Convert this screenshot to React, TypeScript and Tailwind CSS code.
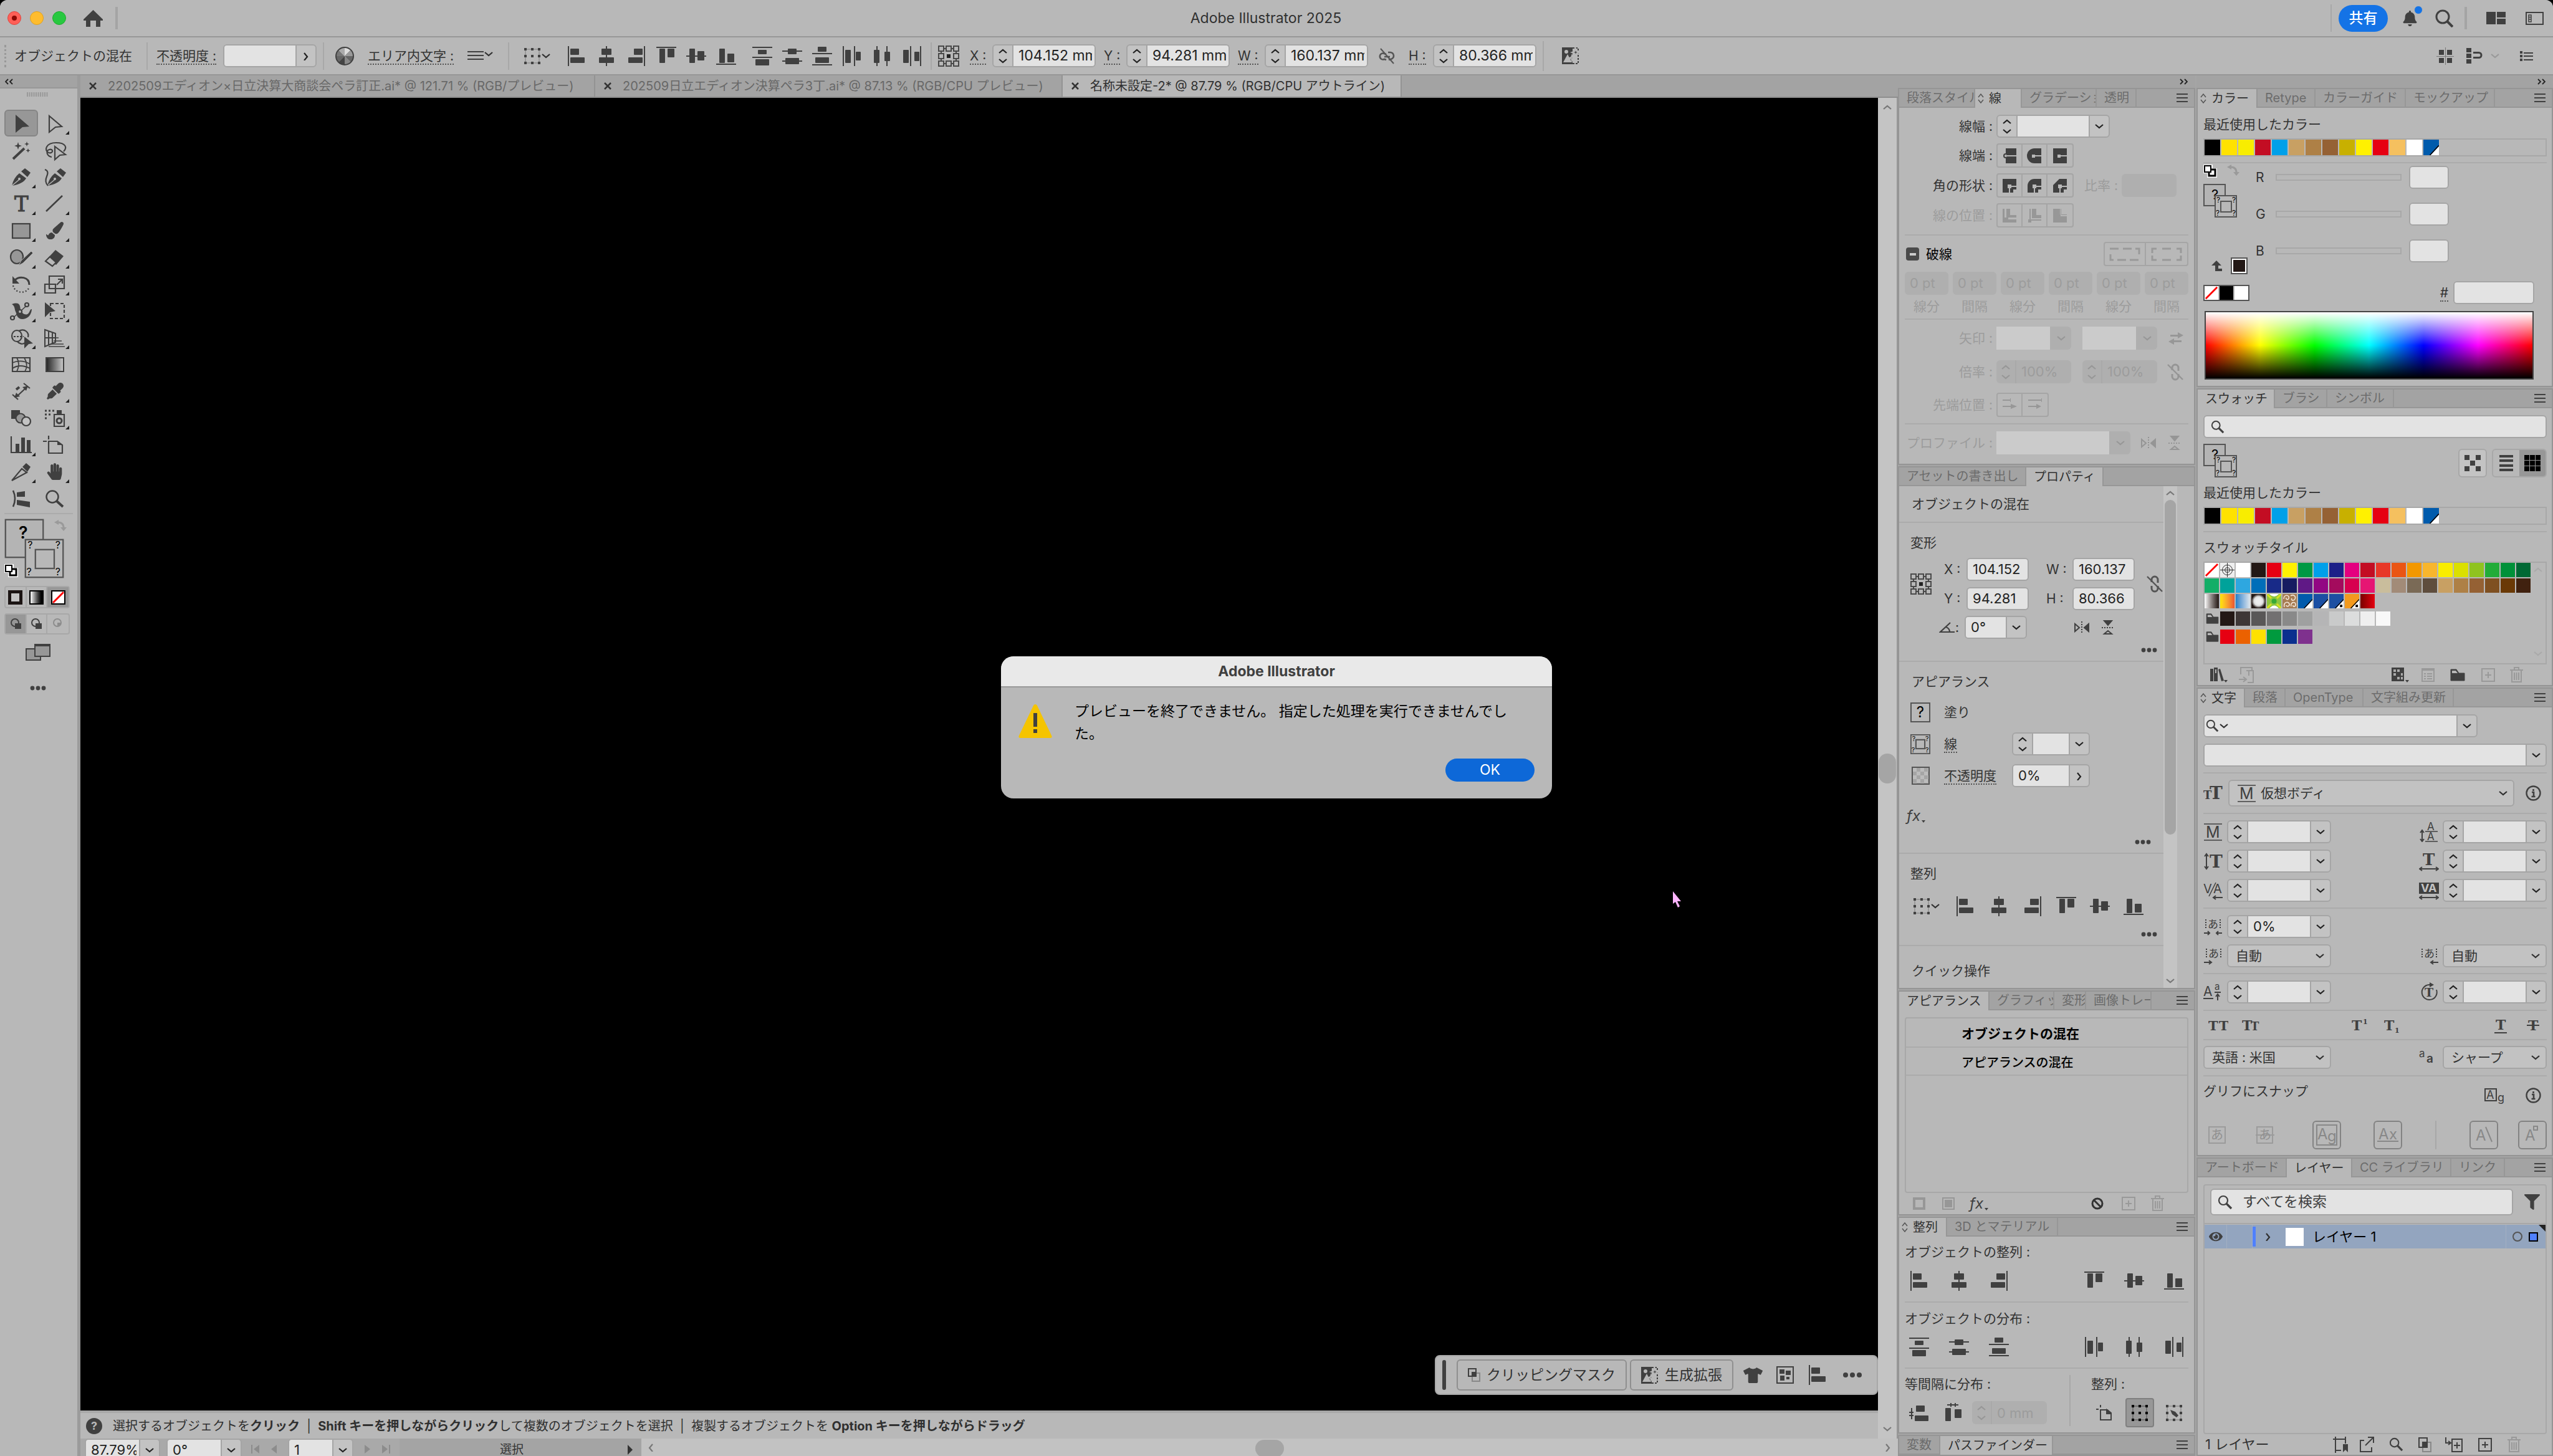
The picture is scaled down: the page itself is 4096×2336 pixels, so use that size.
import type { ReactNode } from 'react';
import clsx from 'clsx';
import { FaBell, FaEye, FaEyeDropper, FaFilter, FaHandPaper, FaPaintBrush, FaTshirt } from 'react-icons/fa';

type Rect = [number, number, number, number];

/* ---------- shared glyphs ---------- */

const alignShapes: Record<string, Rect[]> = {
    left: [[2, 0, 2, 32], [6, 4, 14, 10], [6, 18, 23, 9]],
    hcenter: [[15, 0, 2, 32], [8, 4, 16, 10], [4, 18, 24, 9]],
    right: [[28, 0, 2, 32], [12, 4, 14, 10], [3, 18, 23, 9]],
    top: [[0, 1, 32, 2], [5, 4, 9, 23], [18, 4, 11, 14]],
    vcenter: [[0, 15, 32, 2], [5, 4, 9, 23], [18, 8, 11, 15]],
    bottom: [[0, 28, 32, 2], [5, 4, 9, 23], [18, 12, 11, 14]],
    distTop: [[0, 1, 32, 2], [9, 6, 14, 7], [0, 17, 32, 2], [5, 21, 22, 10]],
    distMid: [[0, 7, 32, 2], [9, 4, 14, 9], [0, 23, 32, 2], [5, 19, 22, 10]],
    distBottom: [[9, 1, 14, 8], [0, 11, 32, 2], [5, 18, 22, 9], [0, 29, 32, 2]],
    distLeft: [[1, 0, 2, 32], [5, 6, 9, 21], [19, 0, 2, 32], [22, 9, 8, 14]],
    distCenter: [[7, 0, 2, 32], [3, 6, 9, 21], [23, 0, 2, 32], [20, 9, 9, 15]],
    distRight: [[2, 6, 9, 21], [13, 0, 2, 32], [20, 9, 8, 15], [29, 0, 2, 32]],
    spaceV: [[1, 14, 7, 2], [1, 19, 7, 2], [4, 8, 2, 18], [12, 4, 14, 10], [10, 20, 22, 9]],
    spaceH: [[6, 2, 18, 2], [11, 0, 2, 6], [18, 0, 2, 6], [3, 8, 9, 21], [18, 10, 11, 14]],
};

const AlignIcon = ({ kind }: { kind: string }) => (
    <svg width="32" height="32" viewBox="0 0 32 32" fill="#404040">
        {alignShapes[kind].map(([x, y, w, h], i) => <rect key={i} x={x} y={y} width={w} height={h} rx={w > 2 && h > 2 ? 1 : 0} />)}
    </svg>
);

const AlignButton = ({ kind }: { kind: string }) => (
    <button aria-label={kind} className="flex w-8 justify-center"><AlignIcon kind={kind} /></button>
);

const chevrons = { down: 'M2 4l6 5 6-5', up: 'M2 10l6-5 6 5', right: 'M5 2l5 6-5 6', left: 'M10 2L5 8l5 6' };

const Chevron = ({ dir = 'down', color = '#303030' }: { dir?: keyof typeof chevrons; color?: string }) => (
    <svg width="16" height="14" viewBox="0 0 16 14" fill="none" stroke={color} strokeWidth="2.2"><path d={chevrons[dir]} /></svg>
);

const Dots = () => (
    <svg width="26" height="8" viewBox="0 0 26 8" fill="#404040"><circle cx="4" cy="4" r="3.4" /><circle cx="13" cy="4" r="3.4" /><circle cx="22" cy="4" r="3.4" /></svg>
);

const Magnifier = ({ size = 24 }: { size?: number }) => (
    <svg width={size} height={size} viewBox="0 0 24 24" fill="none" stroke="#404040"><circle cx="9" cy="9" r="7" strokeWidth="2.2" /><path d="M14 14l8 8" strokeWidth="3.4" /></svg>
);

const RefPoint = () => (
    <svg width="34" height="34" viewBox="0 0 34 34" fill="none" stroke="#4a4a4a" strokeWidth="2">
        <path d="M5 5h24v24H5z" />
        {[1, 13, 25].map((y) => [1, 13, 25].map((x) => (
            <rect key={`${x}-${y}`} x={x} y={y} width="8" height="8" fill={x === 13 && y === 13 ? '#222' : '#b8b8b8'} stroke={x === 13 && y === 13 ? '#b8b8b8' : '#4a4a4a'} />
        )))}
    </svg>
);

const BoundsIcon = ({ color = '#404040' }: { color?: string }) => (
    <svg width="28" height="28" viewBox="0 0 28 28" fill={color}>
        <path d="M3 3h22v22H3z" fill="none" stroke={color} strokeOpacity="0.5" />
        {[1, 12, 23].map((y) => [1, 12, 23].map((x) => <rect key={`${x}-${y}`} x={x} y={y} width="4" height="4" />))}
    </svg>
);

const LinkOff = ({ color = '#555' }: { color?: string }) => (
    <svg width="28" height="32" viewBox="0 0 28 32" fill="none" stroke={color} strokeWidth="3">
        <path d="M9 13V9a5 5 0 0 1 10 0v5M9 19v4a5 5 0 0 0 10 0v-4" />
        <path d="M2 4l24 24" strokeWidth="2.4" />
    </svg>
);

const LinkSlanted = () => (
    <svg width="28" height="28" viewBox="0 0 28 28" fill="none" stroke="#555" strokeWidth="2.6">
        <path d="M12 11l-3-1a5 5 0 1 0 0 9l3 1M15 8h3a5 5 0 0 1 1 11l-3 1M9 15h9" />
        <path d="M3 2l21 24" strokeWidth="2" />
    </svg>
);

const FlipH = ({ color = '#404040' }: { color?: string }) => (
    <svg width="24" height="20" viewBox="0 0 24 20" stroke={color} strokeWidth="2"><path d="M1 4v12l7-6z" fill="none" /><path d="M23 4v12l-7-6z" fill={color} /><path d="M12 0v20" strokeDasharray="2 2" /></svg>
);

const FlipV = ({ color = '#404040' }: { color?: string }) => (
    <svg width="20" height="24" viewBox="0 0 20 24" stroke={color} strokeWidth="2"><path d="M4 1h12l-6 7z" fill={color} /><path d="M4 22h12l-6-5z" fill="none" /><path d="M0 12h20" strokeDasharray="2 2" /></svg>
);

const Sparkle = () => (
    <svg width="28" height="27" viewBox="0 0 28 27" fill="none" stroke="#404040" strokeWidth="2">
        <path d="M1 1h15v25H1z" fill="#404040" />
        <path d="M17 1h9v25h-9" strokeDasharray="3 2" />
        <path d="M2 24l7-13 7 13z" fill="#b8b8b8" stroke="none" />
        <circle cx="7" cy="7" r="3" fill="#b8b8b8" stroke="none" />
        <path d="M22 2l1.5 4.5L28 8l-4.5 1.5L22 14l-1.5-4.5L16 8l4.5-1.5zM16 13l1 3 3 1-3 1-1 3-1-3-3-1 3-1z" fill="#404040" stroke="#b8b8b8" />
    </svg>
);

const Trash = () => (
    <svg width="21" height="26" viewBox="0 0 21 26" fill="none" stroke="#999" strokeWidth="2"><path d="M0 5h21M7 4V1h7v3M3 6v18h15V6M7 9v12M10.5 9v12M14 9v12" /></svg>
);

const PlusBox = ({ color = '#999' }: { color?: string }) => (
    <svg width="22" height="22" viewBox="0 0 22 22" fill="none" stroke={color} strokeWidth="2"><path d="M1 1h20v20H1zM11 6v10M6 11h10" /></svg>
);

const Folder = ({ big }: { big?: boolean }) => (
    <svg width={big ? 24 : 21} height={big ? 20 : 17} viewBox="0 0 24 20"><path d="M1 19V1h9l4 6h9v12z" fill="#404040" stroke="#404040" /><path d="M3 3h6l3 4H3z" fill="#b8b8b8" /></svg>
);

const Info = () => (
    <svg width="25" height="25" viewBox="0 0 25 25"><circle cx="12.5" cy="12.5" r="11" fill="none" stroke="#404040" strokeWidth="2.4" /><path d="M12.5 6v3M10 11h3v7M9.5 18h6" stroke="#404040" strokeWidth="2.6" fill="none" /></svg>
);

const SwapArrow = () => (
    <svg width="20" height="18" viewBox="0 0 20 18"><path d="M6 4q9 0 9 9" fill="none" stroke="#9a9a9a" strokeWidth="3" /><path d="M0 4l7-4v8zM15 18l-5-6h10z" fill="#9a9a9a" /></svg>
);

const DefaultColors = () => (
    <svg width="22" height="21" viewBox="0 0 22 21"><path d="M0 0h15v6h7v15H6v-7H0z" fill="#fff" /><path d="M9 8h10v10H9z" fill="#fff" stroke="#000" strokeWidth="3" /><path d="M2 2h10v10H2z" fill="#fff" stroke="#000" strokeWidth="2" /></svg>
);

const Fx = () => (
    <span className="flex items-end gap-0.5 text-[24px] leading-6 text-[#404040] italic">fx<svg width="6" height="5"><path d="M0 0h6L3 4z" fill="#404040" /></svg></span>
);

/* fill box with an overlapping stroke box, both in the mixed state */
const MixedSwatch = ({ size, line = 2, mark = 12 }: { size: number; line?: number; mark?: number }) => (
    <svg width={size} height={size} viewBox="0 0 54 54" fontFamily="Inter" fill="#000">
        <rect x="1" y="1" width="34" height="34" fill="#b4b4b4" stroke="#555" strokeWidth={line} />
        <text x="13" y={mark > 10 ? 25 : 18} fontSize={mark > 10 ? 22 : 15} fontWeight={mark > 10 ? 400 : 600}>?</text>
        <rect x="19" y="19" width="34" height="34" fill="#b8b8b8" stroke="#555" strokeWidth={line} />
        <rect x="28" y="28" width="17" height="17" fill="none" stroke="#555" strokeWidth={line} />
        <g fontSize={mark}><text x="21" y={mark > 10 ? 30 : 27}>?</text><text x="46" y={mark > 10 ? 30 : 27}>?</text><text x="20" y="51">?</text><text x="46" y="51">?</text></g>
    </svg>
);

/* ---------- form controls ---------- */

type FieldProps = { label: string; value?: string; spin?: boolean; dd?: 'down' | 'right'; off?: boolean; className?: string };

function Field({ label, value = '', spin, dd, off, className }: FieldProps) {
    const ink = off ? '#979797' : '#222';
    return (
        <span className={clsx('flex h-[37px] shrink-0 overflow-hidden rounded-md', off ? 'bg-[#afafaf]' : 'border-2 border-[#a5a5a5] bg-[#c3c3c3]', className)}>
            {spin && (
                <span className={clsx('flex w-8 shrink-0 flex-col items-center justify-center gap-0.5 border-r-2', off ? 'border-[#a9a9a9]' : 'border-[#a5a5a5]')}>
                    <button aria-label={`${label} +`} disabled={off}><Chevron dir="up" color={ink} /></button>
                    <button aria-label={`${label} -`} disabled={off}><Chevron color={ink} /></button>
                </span>
            )}
            <input aria-label={label} defaultValue={value} disabled={off} className={clsx('min-w-0 flex-1 pr-1 pl-2 text-[22px]', off ? 'text-[#9c9c9c]' : 'bg-[#e3e3e3] text-[#222]')} />
            {dd && (
                <button aria-label={`${label} menu`} className="flex w-8 shrink-0 items-center justify-center border-l-2 border-[#a5a5a5]"><Chevron dir={dd} color={ink} /></button>
            )}
        </span>
    );
}

function Select({ label, value, className, children }: { label: string; value: string; className?: string; children?: ReactNode }) {
    return (
        <span className={clsx('relative flex shrink-0 items-center rounded-md border-2 border-[#a5a5a5] bg-[#c2c2c2] pl-3', className)}>
            {children}
            <select aria-label={label} className="h-full min-w-0 flex-1 appearance-none text-[21px]"><option>{value}</option></select>
            <span className="pointer-events-none absolute right-2"><Chevron /></span>
        </span>
    );
}

/* empty, disabled drop-down */
const OffSelect = ({ label, className }: { label: string; className?: string }) => (
    <span className={clsx('relative flex h-[37px] shrink-0 items-center rounded-md bg-[#afafaf]', className)}>
        <select aria-label={label} disabled className="mr-[34px] h-full flex-1 appearance-none bg-[#cbcbcb] opacity-100"><option></option></select>
        <span className="pointer-events-none absolute right-2"><Chevron color="#979797" /></span>
    </span>
);

const Rule = ({ className }: { className?: string }) => <hr className={clsx('h-0.5 border-0 bg-[#ababab]', className)} />;
const VRule = ({ className }: { className?: string }) => <span className={clsx('w-0.5 shrink-0 bg-[#a8a8a8]', className)} />;

type Tab = { name: string; w: string; active?: boolean; arrows?: boolean };

function Panel({ tabs, menu = true, className, children }: { tabs: Tab[]; menu?: boolean; className?: string; children?: ReactNode }) {
    return (
        <section className={clsx('flex shrink-0 flex-col border-2 border-[#959595] bg-[#b8b8b8]', className)}>
            <div className="flex h-[30px] shrink-0 bg-[#a3a3a3]">
                {tabs.map((t) => (
                    <button key={t.name} className={clsx('flex shrink-0 items-center overflow-hidden border-r-2 border-[#979797] text-[20px] leading-5 whitespace-nowrap', t.w, t.active ? 'bg-[#b8b8b8] text-[#303030]' : 'border-b-2 text-[#6c6c6c]', t.arrows ? 'pl-1' : 'pl-3')}>
                        {t.arrows && <svg className="mr-2 shrink-0" width="10" height="16" viewBox="0 0 10 16" fill="none" stroke="#555" strokeWidth="1.5"><path d="M1 6l4-5 4 5M1 10l4 5 4-5" /></svg>}
                        {t.name}
                    </button>
                ))}
                <div className="flex flex-1 items-center justify-end border-b-2 border-[#979797] pr-2.5">
                    {menu && <button aria-label="パネルメニュー"><svg width="18" height="14" viewBox="0 0 18 14" stroke="#404040" strokeWidth="2"><path d="M0 1h18M0 7h18M0 13h18" /></svg></button>}
                </div>
            </div>
            {children}
        </section>
    );
}

const DockHeader = () => (
    <div className="flex h-5 shrink-0 items-center justify-end bg-[#a3a3a3] pr-3">
        <svg width="13" height="10" viewBox="0 0 13 10" fill="none" stroke="#222" strokeWidth="1.8"><path d="M1 1l4 4-4 4M8 1l4 4-4 4" /></svg>
    </div>
);

/* ---------- title bar and control bar ---------- */

const TitleBar = () => (
    <header className="flex h-[60px] shrink-0 items-center border-b-2 border-[#979797] bg-[#b8b8b8]">
        <div className="flex w-[323px] items-center pl-3">
            <div className="flex gap-3.5">
                <button aria-label="閉じる" className="flex size-[22px] items-center justify-center rounded-full border border-[#e0443e] bg-[#ff5f57]"><span className="size-2 rounded-full bg-[#8c0a05]" /></button>
                <button aria-label="しまう" className="size-[22px] rounded-full border border-[#dea123] bg-[#febc2e]" />
                <button aria-label="拡大" className="size-[22px] rounded-full border border-[#1dad2b] bg-[#28c840]" />
            </div>
            <button aria-label="ホーム" className="ml-7">
                <svg width="31" height="27" viewBox="0 0 31 27" fill="#404040"><path d="M15.5 0L31 15v2h-4v10h-7v-10h-9v10H4V17H0v-2z" /></svg>
            </button>
            <span className="ml-5 h-9 w-1 bg-[#a4a4a4]" />
        </div>
        <h1 className="flex-1 text-center text-[23px] text-[#303030]">Adobe Illustrator 2025</h1>
        <div className="flex h-full w-[357px] items-center">
            <VRule className="h-11" />
            <button className="ml-[11px] h-[43px] w-[79px] rounded-full bg-[#1473e6] text-[23px] font-medium text-white">共有</button>
            <button aria-label="通知" className="relative ml-[22px] flex w-[26px] justify-center"><FaBell size={25} color="#404040" /><span className="absolute -top-2 -right-2 size-3.5 rounded-full border border-[#b8b8b8] bg-[#1473e6]" /></button>
            <button aria-label="検索" className="ml-7">
                <svg width="29" height="29" viewBox="0 0 29 29" fill="none" stroke="#404040"><circle cx="12" cy="12" r="10" strokeWidth="3" /><path d="M19 19l9 9" strokeWidth="4" /></svg>
            </button>
            <span className="ml-4.5 h-9 w-1 bg-[#a4a4a4]" />
            <button aria-label="ワークスペース" className="ml-[31px]">
                <svg width="31" height="20" viewBox="0 0 31 20" fill="#404040"><path d="M0 0h15v20H0zM17 0h14v9H17zM17 11h14v9H17z" /></svg>
            </button>
            <button aria-label="表示" className="ml-8">
                <svg width="29" height="22" viewBox="0 0 29 22" fill="none" stroke="#404040" strokeWidth="2"><path d="M1 2h27v19H1zM0 2h29" /><path d="M5 6h4v11H5zM5 9.5h4M5 13h4" strokeWidth="1.5" /></svg>
            </button>
        </div>
    </header>
);

const Dotted = ({ children }: { children: ReactNode }) => <span className="border-b-2 border-dotted border-[#555] leading-[26px] whitespace-pre">{children}</span>;

const ControlBar = () => (
    <div className="flex h-[61px] shrink-0 items-center border-b-2 border-[#979797] bg-[#b8b8b8] text-[21px] [&_input]:text-[23px]">
        <span className="ml-[7px] h-9 border-l-3 border-dotted border-[#999]" />
        <span className="ml-[13px] w-[212px]">オブジェクトの混在</span>
        <VRule className="h-11" />
        <span className="ml-3.5 w-[107px]"><Dotted>不透明度 :</Dotted></span>
        <Field label="不透明度" dd="right" className="w-[150px]" />
        <VRule className="ml-2.5 h-11" />
        <span className="ml-[18px] size-[30px] rounded-full border-2 border-[#404040] bg-[conic-gradient(#ddd_0_12%,#999_12%_25%,#666_25%_37%,#888_37%_50%,#444_50%_62%,#666_62%_75%,#777_75%_87%,#aaa_87%)]" />
        <span className="ml-[22px] w-[160px]"><Dotted>エリア内文字 :</Dotted></span>
        <button aria-label="行揃え" className="flex w-[65px] items-start"><svg width="26" height="20" viewBox="0 0 26 20" stroke="#404040" strokeWidth="2"><path d="M0 3h26M0 9h26M0 15h26" /></svg><Chevron /></button>
        <VRule className="h-11" />
        <button aria-label="整列対象" className="ml-[23px] flex w-[69px] items-center"><BoundsIcon /><Chevron /></button>
        <div className="flex w-[298px] gap-4">
            {['left', 'hcenter', 'right', 'top', 'vcenter', 'bottom'].map((k) => <AlignButton key={k} kind={k} />)}
        </div>
        <div className="flex w-[286px] gap-4">
            {['distTop', 'distMid', 'distBottom', 'distLeft', 'distCenter', 'distRight'].map((k) => <AlignButton key={k} kind={k} />)}
        </div>
        <VRule className="h-11" />
        <button aria-label="基準点" className="ml-2.5"><RefPoint /></button>
        <span className="ml-[17px] w-9"><Dotted>X :</Dotted></span>
        <Field label="X" value="104.152 mm" spin className="w-[166px]" />
        <span className="ml-[13px] w-9"><Dotted>Y :</Dotted></span>
        <Field label="Y" value="94.281 mm" spin className="w-[166px]" />
        <span className="ml-[13px] w-[43px]"><Dotted>W :</Dotted></span>
        <Field label="W" value="160.137 mm" spin className="w-[166px]" />
        <button aria-label="縦横比を固定" className="ml-[17px]"><LinkSlanted /></button>
        <span className="ml-5 w-[39px]"><Dotted>H :</Dotted></span>
        <Field label="H" value="80.366 mm" spin className="w-[166px]" />
        <VRule className="ml-2.5 h-12" />
        <button aria-label="生成" className="ml-[29px]"><Sparkle /></button>
        <div className="ml-auto flex items-center pr-8">
            <svg width="28" height="28" viewBox="0 0 28 28" fill="#404040"><path d="M4 4h8v8H4zM17 4h8v8h-8zM4 17h8v8H4zM17 17h8v8h-8z" /><path d="M14 0h1v28h-1zM0 14h28v1H0z" fill="#777" /></svg>
            <svg className="ml-5" width="26" height="26" viewBox="0 0 26 26" fill="#404040"><path d="M0 0h8v7H0zM0 9h8v7H0zM0 18h8v7H0zM11 6h3v3h-3zM11 14h3v3h-3z" /><path d="M14 7.5h6a4 4 0 0 1 0 8h-6" fill="none" stroke="#404040" strokeWidth="3" /></svg>
            <span className="ml-3"><Chevron color="#999" /></span>
            <svg className="ml-8" width="21" height="16" viewBox="0 0 21 16" fill="#404040"><path d="M0 0h4v4H0zM0 6h4v4H0zM0 12h4v4H0zM6 2h15v2H6zM6 7h15v2H6zM6 13h15v2H6z" /></svg>
        </div>
    </div>
);

/* ---------- tool bar ---------- */

const ink = { stroke: '#404040', strokeWidth: 2.2, fill: 'none' };
const pen = <g fill="#404040"><path d="M9 34q3-13 12-20l11 8q-5 9-23 12z" /><path d="M24 11l6-5 9 7-5 7z" /><path d="M9 34l12-10" stroke="#b8b8b8" strokeWidth="1.5" /><circle cx="21" cy="23" r="2" fill="#b8b8b8" /></g>;

const tools: { name: string; art: ReactNode; more?: boolean; active?: boolean }[] = [
    { name: '選択', active: true, art: <path d="M15 6l22 19-11 1-11 9z" fill="#404040" /> },
    { name: 'ダイレクト選択', more: true, art: <path d="M15 8l20 17-10 1-10 8z" {...ink} /> },
    { name: '自動選択', art: <><path d="M11 34l18-17" {...ink} strokeWidth="4" /><path d="M19 7l1.5 4.500L25 13l-4.5 1.500L19 19l-1.500-4.500L13 13l4.500-1.500zM33 6l1 3 3 1-3 1-1 3-1-3-3-1 3-1zM35 17l1 2.500 2.500 1-2.500 1-1 2.500-1-2.500-2.500-1 2.500-1z" fill="#404040" /></> },
    { name: 'なげなわ', art: <><path d="M14 24c-8-4-4-16 12-16s18 8 12 14M14 24c8 2 8-7 1-5s-3 11 4 12" {...ink} /><path d="M24 14l17 13-9 1-8 7z" {...ink} fill="#b8b8b8" /></> },
    { name: 'ペン', more: true, art: pen },
    { name: '曲線', art: <><g transform="translate(3 0)">{pen}</g><path d="M8 8q7 2 3 11t2 15" {...ink} /></> },
    { name: '文字', more: true, art: <text x="13" y="32" fontSize="34" fontFamily="DejaVu Serif" fill="#404040" stroke="#404040">T</text> },
    { name: '直線', more: true, art: <path d="M10 32L36 7" {...ink} strokeWidth="2.6" /> },
    { name: '長方形', more: true, art: <rect x="10" y="9" width="28" height="23" {...ink} fill="#979797" /> },
    { name: 'ブラシ', more: true, art: <g transform="translate(10 6)"><FaPaintBrush size={28} color="#404040" /></g> },
    { name: 'Shaper', more: true, art: <><ellipse cx="17" cy="19" rx="10" ry="11" {...ink} fill="#979797" /><path d="M20 33l4-8 16-15 3 3-16 16z" fill="#404040" stroke="#b8b8b8" /></> },
    { name: '消しゴム', more: true, art: <><path d="M12 22l13-14 13 10-12 14z" fill="#404040" /><path d="M9 26l7-7 10 9-6 6z" {...ink} fill="#b8b8b8" /></> },
    { name: '回転', more: true, art: <><path d="M13 14c8-8 24-6 24 7" {...ink} strokeWidth="3" /><path d="M10 7v12h11z" fill="#404040" /><path d="M11 22c3 14 23 14 26 2" {...ink} strokeDasharray="2 3" /></> },
    { name: '拡大・縮小', more: true, art: <><path d="M15 7h24v20H15z" {...ink} /><path d="M8 20h17v14H8z" {...ink} /><path d="M27 21l8-8M29 12h7v7" {...ink} /></> },
    { name: '線幅', more: true, art: <><path d="M9 9c14-5 13 4 14 9s7 9 11 7 4-9 7-8c-1 12-9 16-15 16-9 0-9-8-11-12-2-5-1-9-6-12z" fill="#404040" /><path d="M12 30l20-18" {...ink} strokeWidth="1.6" /><circle cx="10" cy="31" r="3" {...ink} /><circle cx="33" cy="10" r="3" {...ink} /><circle cx="22" cy="21" r="3" {...ink} fill="#b8b8b8" /></> },
    { name: '自由変形', more: true, art: <><path d="M17 8h22v24H17z" {...ink} strokeDasharray="5 3" /><path d="M8 6l17 14-9 2-8 8z" fill="#404040" /></> },
    { name: 'シェイプ形成', more: true, art: <><ellipse cx="17" cy="17" rx="8" ry="9" {...ink} /><path d="M20 9c10-5 17 3 15 10M18 26c3 4 9 5 12 2" {...ink} /><path d="M12 18h16" {...ink} strokeDasharray="3 2" /><path d="M29 18l14 11-7 1-7 7z" fill="#404040" /></> },
    { name: '遠近グリッド', more: true, art: <><path d="M8 7l17 6v14L8 34zM8 20h17M14 9v23M20 11v18" {...ink} strokeWidth="2" /><path d="M22 20h8M22 25h13M18 30h20M14 34h26" {...ink} strokeWidth="1.5" /></> },
    { name: 'メッシュ', art: <><path d="M10 9h28v22H10z" {...ink} /><path d="M17 9q6 10 0 22M29 9q7 12 1 22M10 17q14-6 28 2M10 26q12-8 28 0" {...ink} strokeWidth="1.8" /></> },
    { name: 'グラデーション', art: <rect x="10" y="9" width="28" height="22" stroke="#404040" strokeWidth="2" fill="url(#toolGradient)" /> },
    { name: '寸法', art: <><path d="M10 25l9 8M28 7l10 8M17 28l16-15" {...ink} /><path d="M13 30l3-8 6 6zM35 11l-3 8-6-6z" fill="#404040" /><path d="M16 17l5-4" {...ink} strokeWidth="4" /></> },
    { name: 'スポイト', more: true, art: <g transform="translate(11 6)"><FaEyeDropper size={27} color="#404040" /></g> },
    { name: 'ブレンド', art: <><path d="M8 7h14v14H8z" fill="#404040" /><circle cx="23" cy="20" r="7.5" {...ink} fill="#979797" /><circle cx="32" cy="25" r="7" {...ink} fill="#c3c3c3" /></> },
    { name: 'シンボルスプレー', more: true, art: <><path d="M23 14h16v19H23z" {...ink} /><path d="M27 7h8v6h-8z" fill="#404040" /><circle cx="31" cy="24" r="4" {...ink} strokeWidth="3" /><path d="M8 8h3M14 8h3M20 8h3M8 14h3M14 14h3M8 20h3" {...ink} strokeWidth="3" /></> },
    { name: 'グラフ', more: true, art: <><path d="M8 6v26h33" {...ink} /><path d="M15 18h6v13h-6zM24 8h6v23h-6zM33 12h6v19h-6z" fill="#404040" /></> },
    { name: 'アートボード', art: <><path d="M14 14h14l8 6v13H14z" {...ink} /><path d="M5 14h6M14 5v6" {...ink} /><path d="M28 14v6h8z" fill="#404040" /></> },
    { name: 'スライス', more: true, art: <><path d="M9 34l16-19 8 6z" {...ink} /><path d="M26 12l6-6 7 6-5 8z" fill="#404040" /></> },
    { name: '手のひら', more: true, art: <g transform="translate(10 6)"><FaHandPaper size={27} color="#404040" /></g> },
    { name: '回り込み', art: <><path d="M11 7q6 13 0 26" {...ink} strokeWidth="2.6" /><path d="M17 10l13-2v9H17zM17 22l21 3v9l-21-4z" fill="#404040" /></> },
    { name: 'ズーム', art: <><circle cx="20" cy="17" r="9.5" {...ink} strokeWidth="2.5" /><path d="M27 24l10 9" {...ink} strokeWidth="4" /></> },
];

const ToolBar = () => (
    <aside className="flex w-[129px] shrink-0 flex-col border-r-5 border-[#9b9b9b] bg-[#b8b8b8]">
        <div className="flex h-[21px] shrink-0 items-center border-b-2 border-[#979797] bg-[#a3a3a3] pl-2">
            <svg width="13" height="10" viewBox="0 0 13 10" fill="none" stroke="#222" strokeWidth="1.8"><path d="M5 1L1 5l4 4M12 1L8 5l4 4" /></svg>
        </div>
        <svg className="mt-1.5 ml-[43px] h-[7px] shrink-0" width="34" height="7" viewBox="0 0 34 7"><path d="M0 3.5h34" stroke="#999" strokeWidth="7" strokeDasharray="2 1.5" /></svg>
        <div className="mt-[21px] ml-[7px] grid w-[108px] grid-cols-2">
            {tools.map((t) => (
                <button key={t.name} aria-label={t.name} className={clsx('flex h-[43px] items-center justify-center', t.active && 'rounded-md border-2 border-[#858585] bg-[#979797]')}>
                    <svg className="shrink-0" width="48" height="40" viewBox="0 0 48 40">
                        <defs><linearGradient id="toolGradient"><stop stopColor="#222" /><stop offset="1" stopColor="#ccc" /></linearGradient></defs>
                        {t.art}
                        {t.more && <path d="M41 38h6v-6z" fill="#222" />}
                    </svg>
                </button>
            ))}
        </div>
        <Rule className="mx-[7px] mt-0.5 shrink-0" />
        <div className="relative mt-[7px] ml-[7px] h-24 w-[105px] shrink-0">
            <MixedSwatch size={96} line={1.3} mark={9} />
            <span className="absolute top-0.5 left-20"><SwapArrow /></span>
            <span className="absolute bottom-0.5 left-0"><DefaultColors /></span>
        </div>
        <div className="mt-3 ml-[7px] grid h-9 w-[105px] shrink-0 grid-cols-3 rounded-sm border-2 border-[#a8a8a8]">
            <button aria-label="カラー" className="flex items-center justify-center border-r-2 border-[#a8a8a8]"><span className="size-[23px] border-5 border-[#1b1413] bg-[#c3c3c3]" /></button>
            <button aria-label="グラデーション" className="flex items-center justify-center border-r-2 border-[#a8a8a8]"><span className="size-[23px] border-2 border-black bg-linear-to-r from-white to-black" /></button>
            <button aria-label="なし" className="flex items-center justify-center bg-[#979797]"><svg width="23" height="23"><path d="M1 1h21v21H1z" fill="#fff" stroke="#000" strokeWidth="2" /><path d="M3 20L20 3" stroke="red" strokeWidth="3" /></svg></button>
        </div>
        <div className="mt-2 ml-[7px] grid h-[34px] w-[105px] shrink-0 grid-cols-3 rounded-sm border-2 border-[#a8a8a8]">
            {['標準描画', '背面描画', '内側描画'].map((n, i) => (
                <button key={n} aria-label={n} className={clsx('flex items-center justify-center', i === 0 && 'bg-[#979797]', i < 2 && 'border-r-2 border-[#a8a8a8]')}>
                    <svg width="18" height="18" opacity={i === 2 ? 0.35 : 1}><circle cx="8" cy="7" r="6" fill="none" stroke="#404040" strokeWidth="2" /><path d={i === 2 ? 'M8 7h6q0 6-6 6z' : 'M8 8h10v9H8z'} fill="#404040" /></svg>
                </button>
            ))}
        </div>
        <button aria-label="スクリーンモード" className="mt-3.5 ml-[41px] w-10"><svg width="40" height="28" viewBox="0 0 40 28" stroke="#404040" strokeWidth="2" fill="#979797"><path d="M1 9h23v18H1z" /><path d="M15 2h24v19H15z" /><path d="M15 3h24" strokeWidth="4" /></svg></button>
        <button aria-label="ツールバーを編集" className="mt-10 ml-12 w-7"><Dots /></button>
    </aside>
);

/* ---------- document window ---------- */

const docTabs = [
    { w: 'w-[826px]', name: '2202509エディオン×日立決算大商談会ペラ訂正.ai* @ 121.71 % (RGB/プレビュー)' },
    { w: 'w-[750px]', name: '202509日立エディオン決算ペラ3丁.ai* @ 87.13 % (RGB/CPU プレビュー)' },
    { w: 'w-[544px]', name: '名称未設定-2* @ 87.79 % (RGB/CPU アウトライン)', active: true },
];

const NavMark = ({ flip, bar }: { flip?: boolean; bar?: boolean }) => (
    <svg width="18" height="18" viewBox="0 0 18 18" fill="#8c8c8c" className={clsx(flip && 'rotate-180')}><path d="M14 2v14L5 9z" />{bar && <path d="M1 2h2v14H1z" />}</svg>
);

const CanvasPane = () => (
    <div className="flex min-w-0 flex-1 flex-col">
        <div className="flex h-9 shrink-0 border-b-2 border-[#8e8e8e] bg-[#a3a3a3]">
            {docTabs.map((t) => (
                <button key={t.name} className={clsx('flex shrink-0 items-center border-r-2 border-[#939393] pl-3.5 text-[20px] whitespace-nowrap', t.w, t.active ? 'bg-[#b8b8b8] text-[#303030]' : 'text-[#686868]')}>
                    <svg className="mr-[18px]" width="12" height="12" viewBox="0 0 12 12" stroke="#333" strokeWidth="2.5"><path d="M1 1l10 10M11 1L1 11" /></svg>
                    {t.name}
                </button>
            ))}
        </div>
        <div className="flex min-h-0 flex-1">
            <div className="flex min-w-0 flex-1 flex-col">
                <div className="relative min-h-0 flex-1 bg-black">
                    <svg className="absolute top-[1272px] left-[2554px]" width="16" height="28" viewBox="0 0 16 28"><path d="M1 1v20l4-3 4 9 3-2-4-8h6z" fill="#ffb4ff" /></svg>
                    <div className="absolute right-0 bottom-[25px] flex h-16 items-center rounded-lg border-2 border-[#a8a8a8] bg-[#b8b8b8] pl-2.5 text-[23px] whitespace-nowrap">
                        <span className="h-12 w-1.5 rounded-sm bg-[#404040]" />
                        <button className="ml-[17px] flex h-[50px] w-[273px] items-center gap-2.5 rounded-md border-2 border-[#8f8f8f] pl-4">
                            <svg width="20" height="22" viewBox="0 0 20 22" fill="none" stroke="#404040" strokeWidth="2"><path d="M1 1h12v12H1z" /><path d="M7 8h12v13H7z" stroke="#888" /><path d="M7 7h6v6H7z" fill="#404040" /></svg>
                            クリッピングマスク
                        </button>
                        <button className="ml-[5px] flex h-[50px] w-[166px] items-center gap-2.5 rounded-md border-2 border-[#8f8f8f] pl-4"><Sparkle />生成拡張</button>
                        <button aria-label="モックアップ" className="ml-4"><FaTshirt size={31} color="#404040" /></button>
                        <button aria-label="リピート" className="ml-[22px]"><svg width="28" height="28" viewBox="0 0 28 28" fill="#404040"><path d="M1 1h26v26H1z" fill="none" stroke="#404040" strokeWidth="2" /><path d="M5 5h8v7H5zM15 7h8v7h-8zM6 15h7v8H6zM16 17h5v4h-5z" /></svg></button>
                        <button aria-label="整列" className="ml-[22px]"><AlignIcon kind="left" /></button>
                        <button aria-label="その他" className="mr-6 ml-[25px]"><svg width="30" height="8" fill="#404040"><circle cx="4" cy="4" r="4" /><circle cx="15" cy="4" r="4" /><circle cx="26" cy="4" r="4" /></svg></button>
                    </div>
                </div>
                <div className="flex h-[45px] shrink-0 items-center border-t-4 border-[#a8a8a8] bg-[#b8b8b8] pl-[9px] text-[20px] text-[#303030]">
                    <span className="mr-[17px] flex size-[26px] items-center justify-center rounded-full bg-[#404040] text-[18px] font-bold text-[#b8b8b8]">?</span>
                    <p className="whitespace-pre">選択するオブジェクトを<b>クリック</b>&nbsp; | &nbsp;<b>Shift キーを押しながらクリック</b>して複数のオブジェクトを選択&nbsp; | &nbsp;複製するオブジェクトを <b>Option キーを押しながらドラッグ</b></p>
                </div>
            </div>
            <div className="flex w-8 shrink-0 flex-col items-center justify-between border-r-2 border-[#979797] bg-[#c4c4c4] py-2">
                <Chevron dir="up" color="#777" />
                <span className="h-12 w-7 rounded-full bg-[#a5a5a5]" />
                <Chevron color="#777" />
            </div>
        </div>
        <div className="flex h-7 shrink-0 items-start overflow-hidden bg-[#a9a9a9] pl-[7px]">
            <Field label="ズーム" value="87.79%" dd="down" className="w-[121px]" />
            <Field label="回転角度" value="0°" dd="down" className="ml-2.5 w-[121px]" />
            <span className="mt-2 ml-3.5 flex w-[60px] gap-2.5"><NavMark bar /><NavMark /></span>
            <Field label="アートボード" value="1" dd="down" className="w-[105px]" />
            <span className="mt-2 ml-3.5 flex w-[60px] gap-2.5"><NavMark flip /><NavMark flip bar /></span>
            <span className="relative flex h-7 w-[388px] items-center justify-center bg-[#a4a4a4] pt-2 pr-7 text-[19px]">選択<svg className="absolute right-3" width="10" height="16"><path d="M0 0l8 8-8 8z" fill="#333" /></svg></span>
            <div className="flex h-7 flex-1 items-center justify-between bg-[#c2c2c2] px-2">
                <Chevron dir="left" color="#777" />
                <span className="mt-1 h-7 w-[46px] rounded-full bg-[#a5a5a5]" />
                <Chevron dir="right" color="#777" />
            </div>
        </div>
    </div>
);

/* ---------- first dock ---------- */

const Label = ({ off, children }: { off?: boolean; children: ReactNode }) => (
    <span className={clsx('mr-1.5 w-[141px] shrink-0 text-right whitespace-pre', off && 'text-[#9c9c9c]')}>{children}</span>
);

function IconGroup({ label, art, off, wide }: { label: string; art: ReactNode[]; off?: boolean; wide?: boolean }) {
    return (
        <div className="flex h-[39px] divide-x-2 divide-[#a5a5a5] rounded-sm border-2 border-[#a5a5a5]">
            {art.map((a, i) => (
                <button key={i} aria-label={`${label} ${i + 1}`} disabled={off} className={clsx('flex items-center justify-center', wide ? 'w-[66px]' : 'w-10')}>
                    <svg width={wide ? 52 : 24} height="24" viewBox={wide ? '0 0 52 24' : '0 0 24 24'} fill={off ? '#979797' : '#404040'}>{a}</svg>
                </button>
            ))}
        </div>
    );
}

const node = <path d="M8 10h5v1h10v2H13v2H8z" fill="#b8b8b8" />;
const cornerNode = <path d="M9 10h6v2h9v2h-9v2h-2v9h-2v-9H9zM18 18h6v6h-6z" fill="#b8b8b8" />;

const StrokePanel = () => (
    <Panel tabs={[{ name: '段落スタイル', w: 'w-[122px]' }, { name: '線', w: 'w-[75px]', active: true, arrows: true }, { name: 'グラデーション', w: 'w-[120px]' }, { name: '透明', w: 'w-[64px]' }]}>
        <div className="flex flex-col px-[9px] pt-[11px] pb-[15px]">
            <div className="flex flex-col gap-[9px]">
                <div className="flex items-center"><Label>線幅 :</Label><Field label="線幅" spin dd="down" className="w-[182px]" /></div>
                <div className="flex items-center"><Label>線端 :</Label>
                    <IconGroup label="線端" art={[<><path d="M6 0h17v24H6z" /><circle cx="6" cy="12" r="3" fill="#b8b8b8" stroke="#404040" strokeWidth="2" /><path d="M8 11h15v2H8z" fill="#b8b8b8" /></>, <><path d="M12 0h11v24H12a12 12 0 0 1 0-24z" />{node}</>, <><path d="M1 0h22v24H1z" />{node}</>]} />
                </div>
                <div className="flex items-center"><Label>角の形状 :</Label>
                    <IconGroup label="角の形状" art={[<><path d="M1 1h22v22H1z" />{cornerNode}</>, <><path d="M12 1h11v22H1V12A11 11 0 0 1 12 1z" />{cornerNode}</>, <><path d="M11 1h12v22H1V11z" />{cornerNode}</>]} />
                    <span className="ml-[17px] w-[60px] whitespace-pre text-[#9c9c9c]">比率 :</span>
                    <Field label="比率" off className="w-[88px]" />
                </div>
                <div className="flex items-center"><Label off>線の位置 :</Label>
                    <IconGroup off label="線の位置" art={[<path key="a" d="M1 1h3v14h3V1h6v10h10v4H10v3h13v5H1z" />, <path key="b" d="M8 1h7v10h8v5H8zM4 1h2v17h17v2H7v3H2v-5h2z" />, <path key="c" d="M1 1h11v9h11v1H14V1h-1v12h10v10H1z" />]} />
                </div>
            </div>
            <Rule className="mt-[11px]" />
            <div className="mt-2.5 flex h-[39px] items-center">
                <label className="flex flex-1 items-center gap-[11px] pl-0.5 text-black">
                    <span className="relative flex size-[21px] items-center justify-center"><input type="checkbox" className="absolute inset-0 appearance-none rounded-sm bg-[#4a4a4a]" /><span className="relative h-1 w-2.5 bg-[#ccc]" /></span>
                    破線
                </label>
                <IconGroup off wide label="破線の整列" art={[<path key="a" d="M2 3h14M23 3h14M43 3h6v9M3 12v9h5M14 21h14M34 21h14" fill="none" stroke="#999" strokeWidth="3" />, <path key="b" d="M10 3H3v7M10 21H3v-7M19 3h14M19 21h14M42 3h7v7M42 21h7v-7" fill="none" stroke="#999" strokeWidth="3" />]} />
            </div>
            <div className="mt-[9px] flex justify-between text-[#9c9c9c]">
                {['線分', '間隔', '線分', '間隔', '線分', '間隔'].map((n, i) => (
                    <label key={i} className="flex w-[70px] flex-col items-center gap-[3px]"><Field label={`${n} ${i + 1}`} value="0 pt" off className="w-[70px]" /><span className="h-[26px]">{n}</span></label>
                ))}
            </div>
            <Rule className="mt-[9px]" />
            <div className="mt-[11px] flex items-center"><Label off>矢印 :</Label>
                <OffSelect label="矢印の始点" className="w-[120px]" /><OffSelect label="矢印の終点" className="ml-[18px] w-[120px]" />
                <svg className="ml-[18px]" width="24" height="20" fill="#979797"><path d="M3 4h12V0l9 5-9 5V7H3zM21 13H9v-3l-9 5 9 5v-4h12z" /></svg>
            </div>
            <div className="mt-[17px] flex items-center"><Label off>倍率 :</Label>
                <Field label="始点の倍率" value="100%" spin off className="w-[120px]" /><Field label="終点の倍率" value="100%" spin off className="ml-[18px] w-[120px]" />
                <span className="ml-[15px]"><LinkOff color="#959595" /></span>
            </div>
            <div className="mt-[15px] flex items-center"><Label off>先端位置 :</Label>
                <IconGroup off label="先端位置" art={[<path key="a" d="M1 3h12V1h1v6h-1V5H1zM1 13h13v-3l10 4-10 4v-3H1z" />, <path key="b" d="M1 3h21V1h1v6h-1V5H1zM1 13h13v-3l8 4-8 4v-3H1z" />]} />
            </div>
            <Rule className="mt-2.5" />
            <div className="mt-[11px] flex items-center"><Label off>プロファイル :</Label>
                <OffSelect label="プロファイル" className="w-[215px]" />
                <span className="ml-[17px]"><FlipH color="#959595" /></span><span className="ml-5"><FlipV color="#959595" /></span>
            </div>
        </div>
    </Panel>
);

const More = ({ className }: { className?: string }) => (
    <div className={clsx('flex h-[34px] items-center justify-end', className)}><button aria-label="詳細オプション"><Dots /></button></div>
);

const PropertiesPanel = () => (
    <Panel menu={false} tabs={[{ name: 'アセットの書き出し', w: 'w-[204px]' }, { name: 'プロパティ', w: 'w-[124px]', active: true }]}>
        <div className="flex">
            <div className="min-w-0 flex-1">
                <h2 className="flex h-[59px] items-center border-b-2 border-[#ababab] pl-5">オブジェクトの混在</h2>
                <div className="border-b-2 border-[#ababab] pt-5">
                    <h3 className="h-6 pl-[18px] leading-6">変形</h3>
                    <div className="mt-3 flex h-[84px] items-center pl-[18px]">
                        <RefPoint />
                        <div className="ml-5 grid flex-1 grid-cols-[36px_128px_42px_100px] gap-y-2.5">
                            <span className="self-center">X :</span><Field label="変形 X" value="104.152" className="w-[100px]" />
                            <span className="self-center">W :</span><Field label="変形 W" value="160.137" className="w-[100px]" />
                            <span className="self-center">Y :</span><Field label="変形 Y" value="94.281" className="w-[100px]" />
                            <span className="self-center">H :</span><Field label="変形 H" value="80.366" className="w-[100px]" />
                        </div>
                        <LinkOff />
                    </div>
                    <div className="mt-[9px] flex items-center pl-16">
                        <svg width="26" height="20" viewBox="0 0 26 20" fill="none" stroke="#404040" strokeWidth="2.2"><path d="M18 2L2 17h23M11 9q6 2 6 8" /></svg><span className="w-[15px]">:</span>
                        <Field label="角度" value="0°" dd="down" className="w-[100px]" />
                        <span className="ml-[76px]"><FlipH /></span><span className="ml-5"><FlipV /></span>
                    </div>
                    <More className="mt-px pr-2.5" />
                </div>
                <div className="border-b-2 border-[#ababab] pt-5">
                    <h3 className="mb-[11px] h-6 pl-5 leading-6">アピアランス</h3>
                    <div className="flex h-[51px] items-center pl-[18px]">
                        <span className="flex size-8 items-center justify-center border-2 border-[#555] text-[24px] text-black">?</span><span className="ml-[22px]">塗り</span>
                    </div>
                    <div className="flex h-[51px] items-center pl-[18px]">
                        <svg width="32" height="32" viewBox="18 18 36 36" fontFamily="Inter" fontSize="12"><rect x="19" y="19" width="34" height="34" fill="none" stroke="#555" strokeWidth="2" /><rect x="28" y="28" width="16" height="16" fill="none" stroke="#555" strokeWidth="2.4" /><text x="21" y="30">?</text><text x="45" y="30">?</text><text x="20" y="51">?</text><text x="45" y="51">?</text></svg>
                        <span className="ml-[22px] w-[109px]"><Dotted>線</Dotted></span><Field label="線の太さ" spin dd="down" className="w-[125px]" />
                    </div>
                    <div className="flex h-[51px] items-center pl-5">
                        <span className="size-[29px] border-2 border-[#555] bg-[repeating-conic-gradient(#a5a5a5_0_25%,#bcbcbc_0_50%)] bg-[length:12px_12px]" />
                        <span className="ml-[23px] w-[109px]"><Dotted>不透明度</Dotted></span><Field label="不透明度の値" value="0%" dd="right" className="w-[125px]" />
                    </div>
                    <div className="mt-3.5 flex h-[50px] items-center pl-3"><button><Fx /></button></div>
                    <More className="pr-5" />
                </div>
                <div className="border-b-2 border-[#ababab] pt-5">
                    <h3 className="h-6 pl-[18px] leading-6">整列</h3>
                    <div className="mt-5 flex h-10 items-center pl-[22px]">
                        <button aria-label="整列対象" className="flex w-[68px] items-center"><BoundsIcon /><Chevron /></button>
                        <div className="flex gap-[22px]">{['left', 'hcenter', 'right', 'top', 'vcenter', 'bottom'].map((k) => <AlignButton key={k} kind={k} />)}</div>
                    </div>
                    <More className="mt-2 pr-2.5" />
                </div>
                <h3 className="h-[67px] pt-7 pl-5 leading-6">クイック操作</h3>
            </div>
            <div className="mr-[27px] flex w-[22px] flex-col items-center bg-[#c4c4c4] py-1">
                <Chevron dir="up" color="#777" />
                <span className="mt-1 h-[537px] w-[18px] rounded-full bg-[#a5a5a5]" />
                <span className="mt-auto"><Chevron color="#777" /></span>
            </div>
        </div>
    </Panel>
);

const AppearancePanel = () => (
    <Panel tabs={[{ name: 'アピアランス', w: 'w-[145px]', active: true }, { name: 'グラフィックスタイル', w: 'w-[104px]' }, { name: '変形', w: 'w-[51px]' }, { name: '画像トレース', w: 'w-[105px]' }]}>
        <div className="mx-[9px] mt-[11px] h-[282px] rounded-sm border-2 border-[#a8a8a8] text-black">
            <p className="flex h-[47px] items-center border-b-2 border-[#ababab] pt-1 pl-[89px] font-bold">オブジェクトの混在</p>
            <p className="flex h-[45px] items-center border-b-2 border-[#ababab] pt-1 pl-[89px] text-[20px] font-medium">アピアランスの混在</p>
        </div>
        <div className="flex h-[34px] items-center pl-[22px]">
            <button aria-label="新規線を追加" className="size-5 border-4 border-[#979797]" />
            <button aria-label="新規塗りを追加" className="ml-[27px] flex size-5 items-center justify-center border-2 border-[#979797]"><span className="size-3 bg-[#979797]" /></button>
            <button className="ml-6"><Fx /></button>
            <button aria-label="アピアランスを消去" className="mr-[29px] ml-auto"><svg width="20" height="20" fill="none" stroke="#333" strokeWidth="3"><circle cx="10" cy="10" r="8" /><path d="M4 4l12 12" /></svg></button>
            <button aria-label="項目を複製" className="mr-[25px]"><PlusBox /></button>
            <button aria-label="項目を削除" className="mr-12"><Trash /></button>
        </div>
    </Panel>
);

const AlignRow = ({ left, right }: { left: string[]; right: string[] }) => (
    <div className="flex h-8 justify-between px-[7px]">
        <div className="flex gap-8">{left.map((k) => <AlignButton key={k} kind={k} />)}</div>
        <div className="flex gap-8">{right.map((k) => <AlignButton key={k} kind={k} />)}</div>
    </div>
);

const AlignPanel = () => (
    <Panel tabs={[{ name: '整列', w: 'w-[77px]', active: true, arrows: true }, { name: '3D とマテリアル', w: 'w-[178px]' }]}>
        <div className="px-[9px] pt-[13px] pb-2 leading-6">
            <h3>オブジェクトの整列 :</h3>
            <div className="mt-[18px]"><AlignRow left={['left', 'hcenter', 'right']} right={['top', 'vcenter', 'bottom']} /></div>
            <Rule className="mt-[17px]" />
            <h3 className="mt-3.5">オブジェクトの分布 :</h3>
            <div className="mt-[17px]"><AlignRow left={['distTop', 'distMid', 'distBottom']} right={['distLeft', 'distCenter', 'distRight']} /></div>
            <Rule className="mt-[17px]" />
            <div className="flex">
                <div className="mt-[13px] w-[264px]">
                    <h3>等間隔に分布 :</h3>
                    <div className="mt-2.5 flex h-[47px] items-center pl-1.5"><AlignButton kind="spaceV" /><span className="mr-3.5 ml-6"><AlignButton kind="spaceH" /></span><Field label="間隔値" value="0 mm" spin off className="w-[120px]" /></div>
                </div>
                <VRule className="mt-2.5 mb-0.5" />
                <div className="mt-[13px] ml-[33px] flex-1">
                    <h3>整列 :</h3>
                    <div className="mt-2.5 flex h-[47px] items-center pl-2">
                        <button aria-label="アートボードに整列"><svg width="25" height="26" viewBox="0 0 25 26" fill="none" stroke="#404040" strokeWidth="2"><path d="M7 8h11l6 5v11H7zM0 7h4M7 0v4" /><path d="M17 8v6h7z" fill="#404040" /></svg></button>
                        <button aria-label="選択範囲に整列" className="ml-[22px] flex h-[47px] w-[46px] items-center justify-center rounded-sm border-2 border-[#7f7f7f] bg-[#979797]"><BoundsIcon color="#000" /></button>
                        <button aria-label="キーオブジェクトに整列" className="relative ml-[18px]"><BoundsIcon /><svg className="absolute top-2 left-2" width="14" height="14" fill="#404040"><path d="M0 1l8 3 5 6-3 3-7-5z" /></svg></button>
                    </div>
                </div>
            </div>
        </div>
    </Panel>
);

/* ---------- second dock ---------- */

const recent = ['bg-black', 'bg-[#ffe200]', 'bg-[#f8ed00]', 'bg-[#c30d23]', 'bg-[#00a0e9]', 'bg-[#c8a063]', 'bg-[#ae8046]', 'bg-[#956134]', 'bg-[#c8b000]', 'bg-[#fff100]', 'bg-[#e60012]', 'bg-[#f5c05f]', 'bg-white'];

/* white corner that marks a global or spot colour */
const CornerMark = ({ dot }: { dot?: boolean }) => (
    <svg className="size-full" viewBox="0 0 24 24"><path d="M11 24L24 10v14z" fill="#fff" /><path d="M10 24L24 9" stroke="#000" strokeWidth="1.5" />{dot && <path d="M18 18h4v4h-4z" />}</svg>
);

const RecentColors = () => (
    <div className="flex h-[29px] gap-0.5 border-2 border-[#a8a8a8]">
        {recent.map((c) => <button key={c} aria-label={c} className={clsx('w-[25px]', c)} />)}
        <button aria-label="グローバルカラー" className="w-[25px] bg-[#005bac]"><CornerMark /></button>
    </div>
);

const None = ({ size }: { size: number }) => <svg width={size} height={size} viewBox="0 0 24 24"><path d="M0 0h24v24H0z" fill="#fff" /><path d="M2 22L22 2" stroke="red" strokeWidth="3" /></svg>;

const ColorPanel = () => (
    <Panel tabs={[{ name: 'カラー', w: 'w-[96px]', active: true, arrows: true }, { name: 'Retype', w: 'w-[93px]' }, { name: 'カラーガイド', w: 'w-[145px]' }, { name: 'モックアップ', w: 'w-[143px]' }]}>
        <div className="pt-[15px] pr-2 pb-2.5 pl-[9px]">
            <h3 className="mb-2.5 leading-6">最近使用したカラー</h3>
            <RecentColors />
            <Rule className="mt-[9px]" />
            <div className="mt-0.5 flex h-[179px]">
                <div className="w-[84px]">
                    <div className="flex gap-4"><DefaultColors /><SwapArrow /></div>
                    <div className="mt-2.5"><MixedSwatch size={54} /></div>
                    <div className="mt-16 flex items-center gap-3.5 pl-[13px]">
                        <svg width="17" height="18" viewBox="0 0 17 18" fill="#404040"><path d="M8 0l8 8h-5v5h6v4H6V8H0z" /></svg>
                        <span className="size-[27px] border-2 border-[#555] bg-[#231815] outline-2 -outline-offset-4 outline-white" />
                    </div>
                </div>
                <div className="flex flex-col gap-[22px] pt-0.5">
                    {['R', 'G', 'B'].map((c) => (
                        <div key={c} className="flex items-center">
                            <span className="w-8">{c}</span>
                            <input type="range" aria-label={c} className="h-[11px] w-[202px] appearance-none border-2 border-[#a8a8a8] [&::-webkit-slider-thumb]:appearance-none" />
                            <Field label={`${c} 値`} className="ml-3 w-16" />
                        </div>
                    ))}
                </div>
            </div>
            <div className="mt-2 flex items-center pr-5">
                <div className="flex border-2 border-[#555]"><None size={22} /><span className="ml-0.5 size-[22px] bg-black" /><span className="ml-0.5 size-[22px] bg-white" /></div>
                <span className="mr-2 ml-auto"><Dotted>#</Dotted></span>
                <Field label="16進数" className="w-[130px]" />
            </div>
            <div className="mt-[11px] mr-[21px] ml-0.5 h-[110px] border-2 border-[#444] bg-[linear-gradient(to_bottom,#fff,transparent_50%,#000),linear-gradient(to_right,#f00,#ff0,#0f0,#0ff,#00f,#f0f,#f00)]" />
        </div>
    </Panel>
);

const swatchRows = [
    ['bg-white', 'bg-[#231815]', 'bg-[#e60012]', 'bg-[#fff100]', 'bg-[#009944]', 'bg-[#00a0e9]', 'bg-[#1d2088]', 'bg-[#e4007f]', 'bg-[#c30d23]', 'bg-[#e83828]', 'bg-[#ea5514]', 'bg-[#f39800]', 'bg-[#f8b62d]', 'bg-[#f9ed00]', 'bg-[#dbe000]', 'bg-[#8fc31f]', 'bg-[#22ac38]', 'bg-[#009139]', 'bg-[#006934]'],
    ['bg-[#13ae67]', 'bg-[#00a29a]', 'bg-[#2ea7e0]', 'bg-[#006eb9]', 'bg-[#182a88]', 'bg-[#171c61]', 'bg-[#601986]', 'bg-[#920783]', 'bg-[#a40b5d]', 'bg-[#d7004f]', 'bg-[#e61673]', 'bg-[#c9bd9c]', 'bg-[#a28b78]', 'bg-[#7a6a56]', 'bg-[#5e4d3d]', 'bg-[#c8a063]', 'bg-[#ae8046]', 'bg-[#956134]', 'bg-[#7f5021]', 'bg-[#6a3906]', 'bg-[#40210f]'],
    ['bg-linear-to-r from-white to-[#231815]', 'bg-linear-to-r from-[#ffe600] to-[#ea5532]', 'bg-linear-to-r from-[#1f7fc9] to-[#dfe6ec]', 'bg-[radial-gradient(#eee_25%,#ddd_45%,#231815_70%)]'],
];
const grays = ['bg-[#231815]', 'bg-[#3e3736]', 'bg-[#595757]', 'bg-[#727071]', 'bg-[#898989]', 'bg-[#9fa0a0]', 'bg-[#b5b5b6]', 'bg-[#c9caca]', 'bg-[#dcdddd]', 'bg-[#efefef]', 'bg-[#f8f8f8]'];
const brights = ['bg-[#e60012]', 'bg-[#eb6100]', 'bg-[#ffe100]', 'bg-[#009a3e]', 'bg-[#0b308e]', 'bg-[#7f318e]'];

const Swatch = ({ c, children }: { c: string; children?: ReactNode }) => <button aria-label={c} className={clsx('size-[23px] shrink-0', c)}>{children}</button>;

const SwatchesPanel = () => (
    <Panel tabs={[{ name: 'スウォッチ', w: 'w-[124px]', active: true }, { name: 'ブラシ', w: 'w-[84px]' }, { name: 'シンボル', w: 'w-[107px]' }]}>
        <div className="pt-[11px] pr-2 pl-[9px]">
            <label className="flex h-[37px] items-center rounded-md border-2 border-[#a5a5a5] bg-[#e3e3e3] pl-2.5"><Magnifier size={22} /><input aria-label="スウォッチを検索" className="flex-1" /></label>
            <div className="mt-[9px] flex items-end justify-between">
                <MixedSwatch size={54} />
                <div className="flex">
                    <button aria-label="カラーテーマ" className="flex size-[46px] items-center justify-center rounded-md border-2 border-[#a8a8a8] bg-[#c3c3c3]"><svg width="26" height="26" fill="#404040"><path d="M0 0h8v8H0zM18 0h8v8h-8zM9 9h8v8H9zM0 18h8v8H0zM18 18h8v8h-8z" /></svg></button>
                    <div className="ml-2 flex h-[46px] w-[88px] overflow-hidden rounded-md border-2 border-[#a8a8a8]">
                        <button aria-label="リスト表示" className="flex flex-1 items-center justify-center"><svg width="22" height="26" stroke="#404040" strokeWidth="4"><path d="M0 2h22M0 9h22M0 17h22M0 24h22" /></svg></button>
                        <button aria-label="サムネール表示" className="flex flex-1 items-center justify-center bg-[#979797]"><svg width="26" height="26"><path d="M0 0h8v8H0zM9 0h8v8H9zM18 0h8v8h-8zM0 9h8v8H0zM9 9h8v8H9zM18 9h8v8h-8zM0 18h8v8H0zM9 18h8v8H9zM18 18h8v8h-8z" /></svg></button>
                    </div>
                </div>
            </div>
            <h3 className="mt-[13px] mb-2.5 leading-6">最近使用したカラー</h3>
            <RecentColors />
            <Rule className="mt-2.5" />
            <h3 className="mt-[13px] mb-2.5 leading-6">スウォッチタイル</h3>
            <div className="relative h-[165px] border-2 border-[#a8a8a8]">
                <div className="flex flex-col gap-0.5">
                    <div className="flex gap-0.5">
                        <None size={23} />
                        <svg className="bg-[#eee]" width="23" height="23" fill="none" stroke="#333"><circle cx="11.5" cy="11.5" r="8" /><circle cx="11.5" cy="11.5" r="4" /><path d="M11.5 0v23M0 11.5h23" /></svg>
                        {swatchRows[0].map((c) => <Swatch key={c} c={c} />)}
                    </div>
                    <div className="flex gap-0.5">{swatchRows[1].map((c) => <Swatch key={c} c={c} />)}</div>
                    <div className="flex gap-0.5">
                        {swatchRows[2].map((c) => <Swatch key={c} c={c} />)}
                        <Swatch c="bg-[#8dc63f]"><svg width="23" height="23"><path d="M6 0h11q-5 5-11 0zM6 23h11q-5-6-11 0z" fill="#fff" stroke="#fff" strokeWidth="3" /><path d="M0 0l7 7M23 0l-7 7M0 23l7-7M23 23l-7-7" stroke="#d9e021" strokeWidth="3" /><circle cx="11.5" cy="11.5" r="4" fill="#39a935" /></svg></Swatch>
                        <Swatch c="bg-[#a67c52]"><svg width="23" height="23" fill="none" stroke="#f2e6d9" strokeWidth="1.6"><path d="M2 8c0-8 10-7 8-1-1 3-5 2-4-1M13 3c5-3 9 1 7 5s-7 2-5-1M3 21c-2-8 6-10 8-5 1 4-5 5-5 2M14 20c-2-7 7-9 7-3 0 4-5 4-4 1" /></svg></Swatch>
                        <Swatch c="bg-[#005bac]"><CornerMark /></Swatch><Swatch c="bg-[#1b4fa3]"><CornerMark /></Swatch><Swatch c="bg-[#1d50a2]"><CornerMark dot /></Swatch><Swatch c="bg-[#f39a1e]"><CornerMark dot /></Swatch>
                        <Swatch c="bg-linear-to-r from-[#7a0000] to-[#e60012]" />
                    </div>
                </div>
                <div className="mt-[5px] flex items-center gap-0.5"><span className="w-[23px] pl-0.5"><Folder /></span>{grays.map((c) => <Swatch key={c} c={c} />)}</div>
                <div className="mt-1.5 flex items-center gap-0.5"><span className="w-[23px] pl-0.5"><Folder /></span>{brights.map((c) => <Swatch key={c} c={c} />)}</div>
                <span className="absolute top-1 right-1"><Chevron dir="up" color="#aaa" /></span>
                <span className="absolute right-1 bottom-2"><Chevron color="#aaa" /></span>
            </div>
            <div className="flex h-[33px] items-center pl-[11px]">
                <svg width="28" height="24" fill="#404040"><path d="M0 2h5v20H0zM6 0h6v22H6zM13 3l3-1 6 19-4 1zM22 20h6l-3 4z" /><path d="M8 3h2v6H8z" fill="#b8b8b8" /></svg>
                <svg className="ml-[18px]" width="24" height="26" fill="none" stroke="#999" strokeWidth="2"><path d="M3 12V1h18v6M12 6h11v19H14M16 6v8M0 20h10M7 16l5 4-5 4" /></svg>
                <svg className="ml-[221px]" width="28" height="24" fill="#404040"><path d="M0 0h20v22H0zM22 20h6l-3 4z" /><path d="M3 3h4v4H3zM9 3h4v4H9zM3 9h4v4H3zM15 9h3v4h-3zM9 15h4v4H9zM15 15h3v4h-3z" fill="#aaa" /></svg>
                <svg className="ml-5" width="21" height="22" fill="none" stroke="#999" strokeWidth="2"><path d="M1 1h19v20H1zM0 3h21M4 9h3M9 9h8M4 13h3M9 13h8M4 17h3M9 17h8" /></svg>
                <span className="ml-[25px]"><Folder big /></span>
                <span className="ml-[26px]"><PlusBox /></span>
                <span className="ml-6"><Trash /></span>
            </div>
        </div>
    </Panel>
);

/* letters inside the small type icons are set in these faces */
const serif = { fontFamily: 'DejaVu Serif', fontWeight: 700, fill: '#404040', stroke: 'none' };
const sans = { fontFamily: 'Inter', fill: '#404040', stroke: 'none' };
const kana = { fontFamily: 'Noto Sans CJK JP', fill: '#404040', stroke: 'none' };

const TypeIcon = ({ children, w = 32 }: { children: ReactNode; w?: number }) => (
    <svg width={w} height="32" viewBox={`0 0 ${w} 32`} stroke="#404040" strokeWidth="2" fill="none" className="shrink-0">{children}</svg>
);

const typeIcons = {
    size: <><text x="4" y="25" fontSize="25" {...sans}>M</text><path d="M1 3h29M1 29h29" strokeWidth="1.5" /></>,
    leading: <><text x="13" y="13" fontSize="17" {...sans}>A</text><text x="13" y="29" fontSize="17" {...sans}>A</text><path d="M10 15h20M10 31h20" strokeWidth="1.5" /><path d="M5 14v16M2 17l3-4 3 4M2 27l3 4 3-4" /></>,
    vscale: <><text x="10" y="26" fontSize="28" {...serif}>T</text><path d="M5 5v22M2 8l3-4 3 4M2 24l3 4 3-4" /></>,
    hscale: <><text x="6" y="22" fontSize="26" {...serif}>T</text><path d="M2 28h28M5 25l-4 3 4 3M27 25l4 3-4 3" /></>,
    kern: <><text x="0" y="20" fontSize="20" {...sans}>V</text><text x="16" y="20" fontSize="20" {...sans}>A</text><path d="M20 3L9 25" strokeWidth="1.5" /><path d="M17 27h14M20 24l-4 3 4 3" /></>,
    track: <><path d="M0 3h32v18H0z" fill="#404040" stroke="none" /><text x="3" y="18" fontSize="18" fontFamily="Inter" fontWeight="700" fill="#c3c3c3" stroke="none">VA</text><path d="M2 27h28M5 24l-4 3 4 3M27 24l4 3-4 3" /></>,
    tsume: <><text x="7" y="18" fontSize="17" {...kana}>あ</text><path d="M4 4v14M27 4v14" strokeDasharray="2 2" /><path d="M1 26h8M7 23l3 3-3 3M30 26h-8M24 23l-3 3 3 3" /></>,
    akiBefore: <><text x="8" y="18" fontSize="17" {...kana}>あ</text><path d="M5 4v14M28 4v14" strokeDasharray="2 2" /><path d="M1 26h11M9 23l4 3-4 3" /></>,
    akiAfter: <><text x="8" y="18" fontSize="17" {...kana}>あ</text><path d="M5 4v14M28 4v14" strokeDasharray="2 2" /><path d="M31 26H20M23 23l-4 3 4 3" /></>,
    baseline: <><text x="0" y="22" fontSize="21" {...sans}>A</text><text x="18" y="12" fontSize="15" {...sans}>a</text><path d="M0 26h16M18 16h10M23 29v-9M20 23l3-4 3 4" /></>,
    rotate: <><text x="9" y="23" fontSize="19" {...serif}>T</text><path d="M20 4H16a12 12 0 1 0 12 8" /><path d="M17 0l7 4-7 4" fill="#404040" stroke="none" /></>,
    glyph: <><path d="M1 4h18v19H1z" /><text x="3" y="20" fontSize="18" {...sans}>A</text><text x="21" y="24" fontSize="18" {...sans}>g</text></>,
};

const TypeRow = ({ a, b, names }: { a: keyof typeof typeIcons; b: keyof typeof typeIcons; names: [string, string] }) => (
    <div className="flex h-[37px] items-center">
        <span className="mr-1.5"><TypeIcon>{typeIcons[a]}</TypeIcon></span><Field label={names[0]} spin dd="down" className="w-[167px]" />
        <span className="mr-1.5 ml-auto"><TypeIcon>{typeIcons[b]}</TypeIcon></span><Field label={names[1]} spin dd="down" className="w-[167px]" />
    </div>
);

const SnapButton = ({ name, className, children }: { name: string; className?: string; children: ReactNode }) => (
    <button aria-label={name} className={clsx('flex size-[46px] shrink-0 items-center justify-center rounded-md border-2 border-[#838383]', className)}><svg width="34" height="34" viewBox="0 0 34 34" fill="none" stroke="#888" strokeWidth="2">{children}</svg></button>
);

const faint = { fontFamily: 'Inter', fill: '#888', stroke: 'none', fontSize: 24 };

const CharacterPanel = () => (
    <Panel tabs={[{ name: '文字', w: 'w-[76px]', active: true, arrows: true }, { name: '段落', w: 'w-[65px]' }, { name: 'OpenType', w: 'w-[125px]' }, { name: '文字組み更新', w: 'w-[145px]' }]}>
        <div className="pt-[11px] pr-2 pb-[9px] pl-[9px]">
            <div className="relative w-[440px]"><Field label="フォント" dd="down" className="w-full" /><span className="pointer-events-none absolute top-2 left-1 flex items-center"><Magnifier size={21} /><Chevron /></span></div>
            <Field label="フォントスタイル" dd="down" className="mt-2.5" />
            <Rule className="mt-[9px]" />
            <div className="mt-2.5 flex items-center justify-between pr-[9px]">
                <TypeIcon><text x="0" y="25" fontSize="18" {...serif}>T</text><text x="10" y="25" fontSize="28" {...serif}>T</text></TypeIcon>
                <Select label="文字の高さの基準" value="仮想ボディ" className="mr-2.5 ml-2 h-[43px] flex-1 pl-1.5"><span className="mr-1.5"><TypeIcon>{typeIcons.size}</TypeIcon></span></Select>
                <button aria-label="情報" className="ml-2"><Info /></button>
            </div>
            <Rule className="mt-2.5 mb-2.5" />
            <div className="flex flex-col gap-2.5">
                <TypeRow a="size" b="leading" names={['フォントサイズ', '行送り']} />
                <TypeRow a="vscale" b="hscale" names={['垂直比率', '水平比率']} />
                <TypeRow a="kern" b="track" names={['カーニング', 'トラッキング']} />
            </div>
            <Rule className="mt-[9px]" />
            <div className="mt-2.5 flex items-center gap-1.5"><TypeIcon>{typeIcons.tsume}</TypeIcon><Field label="文字ツメ" value="0%" spin dd="down" className="w-[167px]" /></div>
            <div className="mt-2.5 flex items-center">
                <span className="mr-1.5"><TypeIcon>{typeIcons.akiBefore}</TypeIcon></span><Select label="アキを挿入（左）" value="自動" className="h-[37px] w-[167px]" />
                <span className="mr-1.5 ml-auto"><TypeIcon>{typeIcons.akiAfter}</TypeIcon></span><Select label="アキを挿入（右）" value="自動" className="h-[37px] w-[167px]" />
            </div>
            <Rule className="mt-[9px] mb-2.5" />
            <TypeRow a="baseline" b="rotate" names={['ベースラインシフト', '文字回転']} />
            <Rule className="mt-2.5" />
            <div className="flex h-[45px] items-center pr-3 pl-2">
                <button aria-label="オールキャップス"><TypeIcon><text x="0" y="24" fontSize="21" {...serif}>T</text><text x="17" y="24" fontSize="21" {...serif}>T</text></TypeIcon></button>
                <button aria-label="スモールキャップス" className="ml-[22px]"><TypeIcon><text x="0" y="24" fontSize="22" {...serif}>T</text><text x="14" y="24" fontSize="18" {...serif}>T</text></TypeIcon></button>
                <button aria-label="上付き文字" className="ml-36"><TypeIcon><text x="0" y="24" fontSize="22" {...serif}>T</text><text x="18" y="14" fontSize="11" {...serif}>1</text></TypeIcon></button>
                <button aria-label="下付き文字" className="ml-5"><TypeIcon><text x="0" y="24" fontSize="22" {...serif}>T</text><text x="17" y="28" fontSize="11" {...serif}>1</text></TypeIcon></button>
                <button aria-label="下線" className="ml-auto"><TypeIcon w={20}><text x="2" y="23" fontSize="22" {...serif}>T</text><path d="M0 28h20" /></TypeIcon></button>
                <button aria-label="打ち消し線" className="ml-8"><TypeIcon w={20}><text x="2" y="24" fontSize="22" {...serif}>T</text><path d="M0 16h20" /></TypeIcon></button>
            </div>
            <Rule />
            <div className="mt-[9px] flex items-center">
                <Select label="言語" value="英語 : 米国" className="h-[37px] w-[205px]" />
                <span className="mr-1.5 ml-auto"><TypeIcon><text x="0" y="15" fontSize="17" {...sans}>a</text><text x="12" y="24" fontSize="19" fontWeight="600" {...sans}>a</text></TypeIcon></span>
                <Select label="アンチエイリアス" value="シャープ" className="h-[37px] w-[167px]" />
            </div>
            <Rule className="mt-2.5" />
            <div className="mt-3 flex h-7 items-start pr-[9px]"><h3 className="flex-1 leading-6">グリフにスナップ</h3><span className="mt-1"><TypeIcon w={34}>{typeIcons.glyph}</TypeIcon></span><button aria-label="スナップの情報" className="mt-1.5 ml-8"><Info /></button></div>
            <div className="mt-[31px] flex h-[46px] items-center">
                <svg className="ml-2 opacity-60" width="30" height="28" fill="none" stroke="#888" strokeWidth="2"><path d="M1 1h26v26H1z" /><text x="4" y="21" fontSize="20" {...kana} fill="#777">あ</text></svg>
                <svg className="ml-[46px] opacity-60" width="30" height="28" fill="none" stroke="#888" strokeWidth="2"><path d="M2 1h25v26H2zM0 14h30" /><text x="5" y="21" fontSize="20" {...kana} fill="#777">あ</text></svg>
                <SnapButton name="フォントの高さ" className="ml-[61px]"><path d="M1 1h32v32H1z" /><text x="2" y="24" {...faint}>A</text><text x="18" y="27" {...faint}>g</text></SnapButton>
                <SnapButton name="x ハイト" className="ml-[52px]"><text x="2" y="24" {...faint}>A</text><text x="19" y="24" {...faint}>x</text><path d="M0 27h34" /></SnapButton>
                <VRule className="ml-[53px] h-[46px]" />
                <SnapButton name="角度" className="ml-[53px]"><text x="4" y="26" {...faint}>A</text><path d="M20 4l10 24" /></SnapButton>
                <SnapButton name="アンカーポイント" className="ml-auto"><text x="5" y="26" {...faint}>A</text><path d="M19 3h6v6h-6z" /></SnapButton>
            </div>
        </div>
    </Panel>
);

const LayersPanel = () => (
    <Panel className="min-h-0 flex-1" tabs={[{ name: 'アートボード', w: 'w-[143px]' }, { name: 'レイヤー', w: 'w-[105px]', active: true }, { name: 'CC ライブラリ', w: 'w-[159px]' }, { name: 'リンク', w: 'w-[86px]' }]}>
        <div className="mt-[11px] mr-2 ml-[9px] min-h-0 flex-1 rounded-sm border-2 border-[#a8a8a8]">
            <div className="flex items-center border-b-2 border-[#a8a8a8] px-[9px] pt-[5px] pb-3">
                <label className="flex h-[43px] flex-1 items-center rounded-md border-2 border-[#a5a5a5] bg-[#e3e3e3] pl-2.5"><Magnifier /><input aria-label="レイヤーを検索" placeholder="すべてを検索" className="ml-4 flex-1 text-[23px] placeholder:text-[#404040]" /></label>
                <button aria-label="フィルター" className="ml-[18px]"><FaFilter size={25} color="#404040" /></button>
            </div>
            <div className="relative mt-px flex h-[38px] items-center bg-[#93a5bf] text-[22px] text-black">
                <button aria-label="表示の切り替え" className="flex h-full w-9 items-center justify-center border-r border-[#a3afc2]"><FaEye size={22} color="#404040" /></button>
                <span className="h-full w-[41px] border-r border-[#a3afc2]" />
                <span className="h-8 w-[5px] bg-[#4f80ff]" />
                <button aria-label="展開" className="ml-3"><Chevron dir="right" /></button>
                <span className="ml-5 size-[29px] bg-white" />
                <span className="ml-3.5 flex-1">レイヤー 1</span>
                <span className="h-full border-l border-[#a3afc2]" />
                <span className="ml-2.5 size-4 rounded-full border-2 border-[#555]" />
                <span className="mr-3 ml-2.5 size-[15px] border-2 border-black bg-[#4f80ff]" />
                <svg className="absolute top-0 right-0" width="11" height="11"><path d="M0 0h11v11z" fill="#222" /></svg>
            </div>
        </div>
        <div className="flex h-[33px] shrink-0 items-center pl-3">
            <span className="flex-1 text-[22px]">1 レイヤー</span>
            <svg width="25" height="26" fill="none" stroke="#404040" strokeWidth="2"><path d="M4 4h16v7M13 22H4V4M0 4h4M4 0v4M20 0v4M4 22v4" /><path d="M16 12h8v13l-4-4-4 4z" fill="#404040" stroke="none" /></svg>
            <svg className="ml-[18px]" width="23" height="25" fill="none" stroke="#404040" strokeWidth="2"><path d="M7 6H1v18h18v-7M9 14L21 2M13 1h9v9" /></svg>
            <span className="ml-6"><Magnifier size={23} /></span>
            <svg className="ml-6" width="21" height="24" fill="none" stroke="#888" strokeWidth="2"><path d="M7 8h13v15H7z" /><path d="M1 1h13v15H1z" stroke="#404040" /><path d="M6 7h8v9H6z" fill="#404040" stroke="none" /></svg>
            <svg className="ml-[22px]" width="28" height="24" fill="none" stroke="#404040" strokeWidth="2"><path d="M11 3h16v20H11zM19 8v10M14 13h10M1 0v9h7M5 6l4 3-4 3" /></svg>
            <span className="ml-[25px]"><PlusBox color="#404040" /></span>
            <span className="mr-[50px] ml-[25px]"><Trash /></span>
        </div>
    </Panel>
);

/* ---------- alert ---------- */

const AlertDialog = () => (
    <div role="alertdialog" aria-label="Adobe Illustrator" className="absolute top-[1053px] left-1/2 w-[884px] -translate-x-1/2 overflow-hidden rounded-[20px] bg-[#b8b8b8] text-[23px] text-black">
        <h2 className="flex h-[50px] items-center justify-center border-b-2 border-[#989898] bg-[#e9e9e9] text-[23px] font-bold text-[#404040]">Adobe Illustrator</h2>
        <div className="flex pt-5 pl-7">
            <svg className="mt-[7px]" width="54" height="54" viewBox="0 0 54 54"><path d="M27 0q2 0 3 2l23 48q2 4-2 4H3q-4 0-2-4L24 2q1-2 3-2z" fill="#f5c400" /><path d="M24 14h6v22h-6zM24 40h6v6h-6z" fill="#404040" /></svg>
            <p className="ml-9 w-[712px] leading-9">プレビューを終了できません。 指定した処理を実行できませんでした。</p>
        </div>
        <div className="flex justify-end pt-[22px] pr-7 pb-[27px]"><button className="h-[37px] w-[143px] rounded-full bg-[#0d68d8] text-white">OK</button></div>
    </div>
);

export default function App() {
    return (
        <div className="bg-black">
            <main className="relative flex h-screen flex-col overflow-hidden rounded-t-xl bg-[#a5a5a5] font-['Inter','Noto_Sans_CJK_JP',sans-serif] text-[21px] text-[#333]">
                <TitleBar />
                <ControlBar />
                <div className="flex min-h-0 flex-1">
                    <ToolBar />
                    <CanvasPane />
                    <div className="flex w-[477px] shrink-0 flex-col gap-0.5 overflow-hidden">
                        <div className="-mb-0.5"><DockHeader /></div>
                        <StrokePanel />
                        <PropertiesPanel />
                        <AppearancePanel />
                        <AlignPanel />
                        <Panel className="flex-1" tabs={[{ name: '変数', w: 'w-[66px]' }, { name: 'パスファインダー', w: 'w-[181px]', active: true }]} />
                    </div>
                    <div className="ml-0.5 flex w-[572px] shrink-0 flex-col gap-0.5 overflow-hidden">
                        <div className="-mb-0.5"><DockHeader /></div>
                        <ColorPanel />
                        <SwatchesPanel />
                        <CharacterPanel />
                        <LayersPanel />
                    </div>
                </div>
                <AlertDialog />
            </main>
        </div>
    );
}
